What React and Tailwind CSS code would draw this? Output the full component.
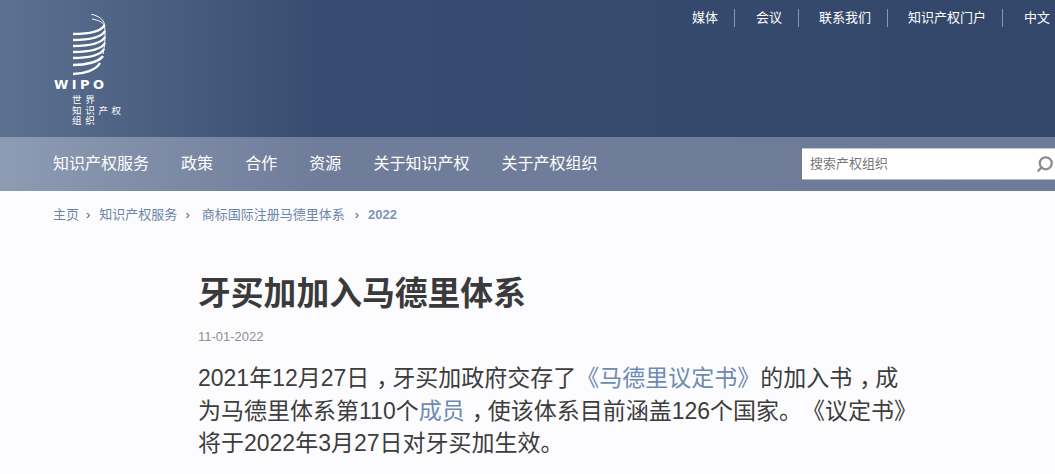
import React from 'react';
import { Search } from 'lucide-react';

const cjk = "font-['Liberation_Sans','Noto_Sans_CJK_SC',sans-serif]";

const topLinks = ['媒体', '会议', '联系我们', '知识产权门户', '中文'];
const navLinks = ['知识产权服务', '政策', '合作', '资源', '关于知识产权', '关于产权组织'];

function WipoLogo() {
  return (
    <svg width="36" height="62" viewBox="0 0 36 62" className="block">
      <g fill="none" stroke="#ffffff">
        <path d="M19 0 C26 2 32 5 32.5 11" strokeWidth="1" />
        <path d="M20 5 C26 6 31 8 32.5 12" strokeWidth="1" />
        <path d="M32.5 11 C33.5 20 33 32 31 40" strokeWidth="1" />
        <path d="M1 20 C15 20 29 18 32.5 11" strokeWidth="2.4" />
        <path d="M1 26 C15 26 29 24 33 17" strokeWidth="2.4" />
        <path d="M1 32 C15 32 29 30 33 23" strokeWidth="2.4" />
        <path d="M1 38 C15 38 29 36 33 29" strokeWidth="2.4" />
        <path d="M1 44 C15 44 28 42 32 35" strokeWidth="2.4" />
        <path d="M1 51 C14 51 27 48 31 42" strokeWidth="2.4" />
        <path d="M1 60 C12 60 24 56 28 49" strokeWidth="2.4" />
      </g>
    </svg>
  );
}

function Header() {
  return (
    <header className="flex h-[137px] bg-gradient-to-r from-[#5d7190] via-[#384c71] via-30% to-[#33476b]">
      <div className="ml-[54px] flex w-[80px] flex-col pt-[14px]">
        <div className="ml-[18px]">
          <WipoLogo />
        </div>
        <div className="font-['DejaVu_Sans',sans-serif] text-[13px] leading-[18px] font-bold tracking-[3.4px] text-white">
          WIPO
        </div>
        <div className={`${cjk} mt-[1px] ml-[18px] text-[9.5px] leading-[10.5px] tracking-[3.7px] whitespace-nowrap text-white`}>
          <div>世界</div>
          <div>知识产权</div>
          <div>组织</div>
        </div>
      </div>
      <div className="ml-auto flex h-[18px] translate-y-[9px] items-center">
        {topLinks.map((label, i) => (
          <span
            key={label}
            className={`${cjk} flex h-[18px] items-center text-[13px] text-white ${i === 0 ? '' : i === 1 || i === 4 ? 'pl-[21px]' : 'pl-[20px]'} ${i === topLinks.length - 1 ? 'pr-[5px]' : 'border-r border-[#8497b3] pr-[16px]'}`}
          >
            {label}
          </span>
        ))}
      </div>
    </header>
  );
}

function NavBar() {
  return (
    <nav className="flex h-[54px] items-center bg-gradient-to-r from-[#8d9bb3] via-[#6f7d9b] via-30% to-[#6e7a98] pl-[53px]">
      <ul className={`${cjk} flex gap-[32.1px] text-[16px] text-white`}>
        {navLinks.map((label) => (
          <li key={label}>{label}</li>
        ))}
      </ul>
      <div className="ml-auto flex h-[32px] w-[253px] items-center justify-between border-y border-b-[#b4bcc9] border-t-[#c5cbd6] bg-white pr-[1px] pl-[8px]">
        <span className={`${cjk} text-[13px] text-[#777777]`}>搜索产权组织</span>
        <Search size={18} strokeWidth={3} className="-scale-x-100 text-[#8a8a8a]" />
      </div>
    </nav>
  );
}

function Breadcrumb() {
  const link = 'text-[#6d84a8]';
  const sep = 'text-[#555f70] text-[13px]';
  return (
    <div className={`${cjk} flex h-[48px] items-center pl-[53px] text-[13px]`}>
      <span className={link}>主页</span>
      <span className={`${sep} ml-[7px] mr-[9px]`}>›</span>
      <span className={link}>知识产权服务</span>
      <span className={`${sep} ml-[8px] mr-[12px]`}>›</span>
      <span className={link}>商标国际注册马德里体系</span>
      <span className={`${sep} ml-[10px] mr-[9px]`}>›</span>
      <span className="font-bold text-[#7e92bb]">2022</span>
    </div>
  );
}

// the comma sits in the middle of its cell in the reference
function Comma() {
  return <span className="pr-[4.5px] pl-[7px] [font-feature-settings:'halt']">，</span>;
}

export default function App() {
  return (
    <div className={`${cjk} h-[474px] w-[1055px] overflow-hidden bg-[#fcfcfe]`}>
      <Header />
      <NavBar />
      <Breadcrumb />
      <main className="pl-[198px]">
        <h1 className="mt-[33px] text-[32.8px] leading-[44px] font-bold text-[#3a3a3a]">牙买加加入马德里体系</h1>
        <p className="mt-[12px] text-[13px] leading-[18px] text-[#8f8f8f]">11-01-2022</p>
        <p className="mt-[16px] w-[730px] text-[23px] leading-[32.5px] text-[#3d3d3d] [text-spacing-trim:space-all]">
          2021年12月27日<Comma />牙买加政府交存了<span className="text-[#6d8ab5]">《马德里议定书》</span>的加入书<Comma />成
          <br />
          为马德里体系第110个<span className="text-[#6d8ab5]">成员</span><Comma />使该体系目前涵盖126个国家。《议定书》
          <br />
          将于2022年3月27日对牙买加生效。
        </p>
      </main>
    </div>
  );
}
